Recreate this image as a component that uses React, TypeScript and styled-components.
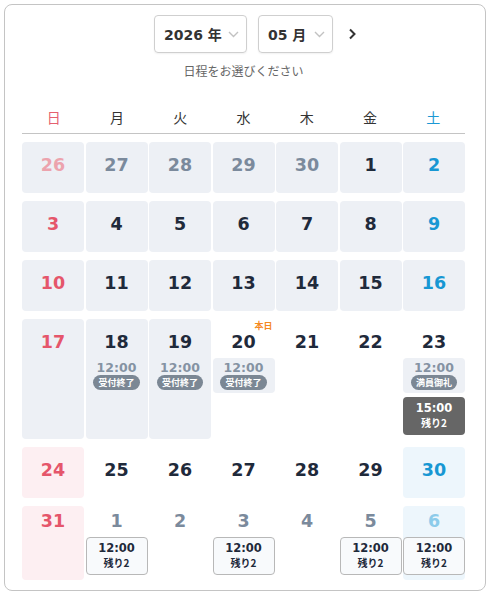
import React from 'react'
import styled, { createGlobalStyle } from 'styled-components'

type SlotKind = 'closed' | 'dark' | 'open'
type Slot = { time: string; kind: SlotKind; label: string }
type Tone = 'plain' | 'past' | 'sun' | 'sat'
type NumColor = 'normal' | 'muted' | 'sun' | 'sunMuted' | 'sat' | 'satMuted'
type Day = { d: number; color: NumColor; tone: Tone; today?: boolean; slots?: Slot[] }

const closed = (label = '受付終了'): Slot => ({ time: '12:00', kind: 'closed', label })
const open = (time = '12:00'): Slot => ({ time, kind: 'open', label: '残り2' })

const WEEK = ['日', '月', '火', '水', '木', '金', '土']

const weeks: { tight?: boolean; days: Day[] }[] = [
  {
    days: [
      { d: 26, color: 'sunMuted', tone: 'past' },
      { d: 27, color: 'muted', tone: 'past' },
      { d: 28, color: 'muted', tone: 'past' },
      { d: 29, color: 'muted', tone: 'past' },
      { d: 30, color: 'muted', tone: 'past' },
      { d: 1, color: 'normal', tone: 'past' },
      { d: 2, color: 'sat', tone: 'past' },
    ],
  },
  {
    days: [3, 4, 5, 6, 7, 8, 9].map((d, i) => ({
      d,
      color: i === 0 ? 'sun' : i === 6 ? 'sat' : 'normal',
      tone: 'past',
    })),
  },
  {
    days: [10, 11, 12, 13, 14, 15, 16].map((d, i) => ({
      d,
      color: i === 0 ? 'sun' : i === 6 ? 'sat' : 'normal',
      tone: 'past',
    })),
  },
  {
    days: [
      { d: 17, color: 'sun', tone: 'past' },
      { d: 18, color: 'normal', tone: 'past', slots: [closed()] },
      { d: 19, color: 'normal', tone: 'past', slots: [closed()] },
      { d: 20, color: 'normal', tone: 'plain', today: true, slots: [closed()] },
      { d: 21, color: 'normal', tone: 'plain' },
      { d: 22, color: 'normal', tone: 'plain' },
      {
        d: 23,
        color: 'normal',
        tone: 'plain',
        slots: [closed('満員御礼'), { time: '15:00', kind: 'dark', label: '残り2' }],
      },
    ],
  },
  {
    days: [
      { d: 24, color: 'sun', tone: 'sun' },
      { d: 25, color: 'normal', tone: 'plain' },
      { d: 26, color: 'normal', tone: 'plain' },
      { d: 27, color: 'normal', tone: 'plain' },
      { d: 28, color: 'normal', tone: 'plain' },
      { d: 29, color: 'normal', tone: 'plain' },
      { d: 30, color: 'sat', tone: 'sat' },
    ],
  },
  {
    tight: true,
    days: [
      { d: 31, color: 'sun', tone: 'sun' },
      { d: 1, color: 'muted', tone: 'plain', slots: [open()] },
      { d: 2, color: 'muted', tone: 'plain' },
      { d: 3, color: 'muted', tone: 'plain', slots: [open()] },
      { d: 4, color: 'muted', tone: 'plain' },
      { d: 5, color: 'muted', tone: 'plain', slots: [open()] },
      { d: 6, color: 'satMuted', tone: 'sat', slots: [open()] },
    ],
  },
]

const numColors: Record<NumColor, string> = {
  normal: '#1f2a3b',
  muted: '#7b8a9c',
  sun: '#e5566b',
  sunMuted: '#eca3ad',
  sat: '#1797d3',
  satMuted: '#8ccbea',
}

const toneBg: Record<Tone, string> = {
  plain: 'transparent',
  past: '#edf0f5',
  sun: '#fdeff2',
  sat: '#edf6fc',
}

const App: React.FC = () => {
  return (
    <>
      <GlobalStyle />
      <StyledCard>
        <StyledControls>
          <StyledNav $hidden aria-hidden>
            <Chevron dir="left" />
          </StyledNav>
          <StyledSelect $width={93}>
            <span>2026 年</span>
            <DownArrow />
          </StyledSelect>
          <StyledSelect $width={75}>
            <span>05 月</span>
            <DownArrow />
          </StyledSelect>
          <StyledNav>
            <Chevron dir="right" />
          </StyledNav>
        </StyledControls>
        <StyledHint>日程をお選びください</StyledHint>

        <StyledWeekHead>
          {WEEK.map((w, i) => (
            <StyledWeekLabel key={w} $color={i === 0 ? '#e5606f' : i === 6 ? '#1b98d4' : '#333'}>
              {w}
            </StyledWeekLabel>
          ))}
        </StyledWeekHead>

        <StyledGrid>
          {weeks.map((week, wi) =>
            week.days.map((day, di) => (
              <StyledCell key={`${wi}-${di}`} $bg={toneBg[day.tone]} $tight={!!week.tight}>
                {day.today && <StyledToday>本日</StyledToday>}
                <StyledNum $color={numColors[day.color]}>{day.d}</StyledNum>
                {day.slots && (
                  <StyledSlots>
                    {day.slots.map((s, si) => (
                      <StyledSlot key={si} $kind={s.kind} $blend={day.tone === 'past'}>
                        <StyledTime $kind={s.kind}>{s.time}</StyledTime>
                        {s.kind === 'closed' ? (
                          <StyledBadge>{s.label}</StyledBadge>
                        ) : (
                          <StyledLeft>{s.label}</StyledLeft>
                        )}
                      </StyledSlot>
                    ))}
                  </StyledSlots>
                )}
              </StyledCell>
            ))
          )}
        </StyledGrid>
      </StyledCard>
    </>
  )
}

const DownArrow: React.FC = () => (
  <svg width="11" height="7" viewBox="0 0 11 7" fill="none">
    <path d="M1 1l4.5 4.5L10 1" stroke="#c2c2c2" strokeWidth="1.4" />
  </svg>
)

const Chevron: React.FC<{ dir: 'left' | 'right' }> = ({ dir }) => (
  <svg width="8" height="12" viewBox="0 0 8 12" fill="none">
    <path
      d={dir === 'right' ? 'M2 1.5l4.5 4.5L2 10.5' : 'M6 1.5L1.5 6 6 10.5'}
      stroke="#333"
      strokeWidth="2"
    />
  </svg>
)

const GlobalStyle = createGlobalStyle`
  body {
    margin: 0;
    background: #fff;
    font-family: "DejaVu Sans", "Noto Sans CJK JP", sans-serif;
  }
`

const StyledCard = styled.div`
  margin: 4px;
  width: 482px;
  height: 587px;
  box-sizing: border-box;
  border: 1px solid #c4c4c4;
  border-radius: 8px;
  padding: 10px 20px 0 17px;
`

const StyledControls = styled.div`
  display: flex;
  justify-content: center;
  align-items: center;
  gap: 11px;
`

const StyledNav = styled.button<{ $hidden?: boolean }>`
  width: 16px;
  height: 24px;
  padding: 0;
  border: none;
  background: none;
  display: flex;
  align-items: center;
  justify-content: center;
  cursor: pointer;
  visibility: ${p => (p.$hidden ? 'hidden' : 'visible')};
`

const StyledSelect = styled.div<{ $width: number }>`
  width: ${p => p.$width}px;
  height: 38px;
  box-sizing: border-box;
  border: 1px solid #cfcfcf;
  border-radius: 4px;
  box-shadow: 0 1px 2px rgba(0, 0, 0, 0.06);
  display: flex;
  align-items: center;
  justify-content: space-between;
  padding: 0 7px 0 9px;
  font-size: 14px;
  font-weight: 700;
  color: #333;
`

const StyledHint = styled.p`
  margin: 9px 0 0;
  text-align: center;
  font-family: "Noto Sans CJK JP", sans-serif;
  font-size: 12px;
  line-height: 18px;
  color: #666;
`

const StyledWeekHead = styled.div`
  margin-top: 20px;
  display: grid;
  grid-template-columns: repeat(7, 1fr);
  height: 33px;
  border-bottom: 1px solid #c4c4c4;
`

const StyledWeekLabel = styled.div<{ $color: string }>`
  display: flex;
  align-items: center;
  justify-content: center;
  font-family: "Noto Sans CJK JP", sans-serif;
  font-size: 14px;
  color: ${p => p.$color};
`

const StyledGrid = styled.div`
  margin-top: 8px;
  display: grid;
  grid-template-columns: repeat(7, 1fr);
  gap: 8px 1.5px;
`

const StyledCell = styled.div<{ $bg: string; $tight: boolean }>`
  position: relative;
  min-height: 51px;
  box-sizing: border-box;
  padding: ${p => (p.$tight ? '0 0 5px' : '8px 0 4px')};
  background: ${p => p.$bg};
  border-radius: 4px;
  display: flex;
  flex-direction: column;
  align-items: center;
`

const StyledToday = styled.span`
  position: absolute;
  top: 1px;
  right: 2px;
  font-family: "Noto Sans CJK JP", sans-serif;
  font-size: 9px;
  line-height: 11px;
  font-weight: 700;
  color: #f5891f;
`

const StyledNum = styled.div<{ $color: string }>`
  font-size: 17.5px;
  line-height: 31px;
  font-weight: 700;
  color: ${p => p.$color};
`

const StyledSlots = styled.div`
  width: 100%;
  display: flex;
  flex-direction: column;
  gap: 4px;
`

const slotBg = (kind: SlotKind) => (kind === 'dark' ? '#666' : kind === 'open' ? '#f8fafc' : '#edf0f5')
const slotInk = (kind: SlotKind) => (kind === 'dark' ? '#fff' : kind === 'open' ? '#1f2a3b' : '#7d8b9c')

const StyledSlot = styled.div<{ $kind: SlotKind; $blend: boolean }>`
  height: ${p => (p.$kind === 'closed' ? 35 : 38)}px;
  box-sizing: border-box;
  border-radius: 4px;
  border: 1px solid ${p => (p.$kind === 'open' ? '#b8b8b8' : 'transparent')};
  background: ${p => (p.$blend ? 'transparent' : slotBg(p.$kind))};
  color: ${p => slotInk(p.$kind)};
  display: flex;
  flex-direction: column;
  align-items: center;
  padding-top: ${p => (p.$kind === 'closed' ? 2 : 4)}px;
  gap: 1px;
`

const StyledTime = styled.div<{ $kind: SlotKind }>`
  font-size: ${p => (p.$kind === 'closed' ? 12.5 : 11.5)}px;
  line-height: 13px;
  font-weight: 700;
  color: ${p => (p.$kind === 'closed' ? '#8593a3' : 'inherit')};
`

const StyledBadge = styled.span`
  height: 15px;
  padding: 0 5px;
  border-radius: 8px;
  background: #7b8794;
  color: #fff;
  font-family: "Noto Sans CJK JP", sans-serif;
  font-size: 9px;
  line-height: 15px;
  font-weight: 700;
`

const StyledLeft = styled.span`
  font-family: "Noto Sans CJK JP", sans-serif;
  font-size: 10px;
  line-height: 14px;
  font-weight: 700;
`

export default App
